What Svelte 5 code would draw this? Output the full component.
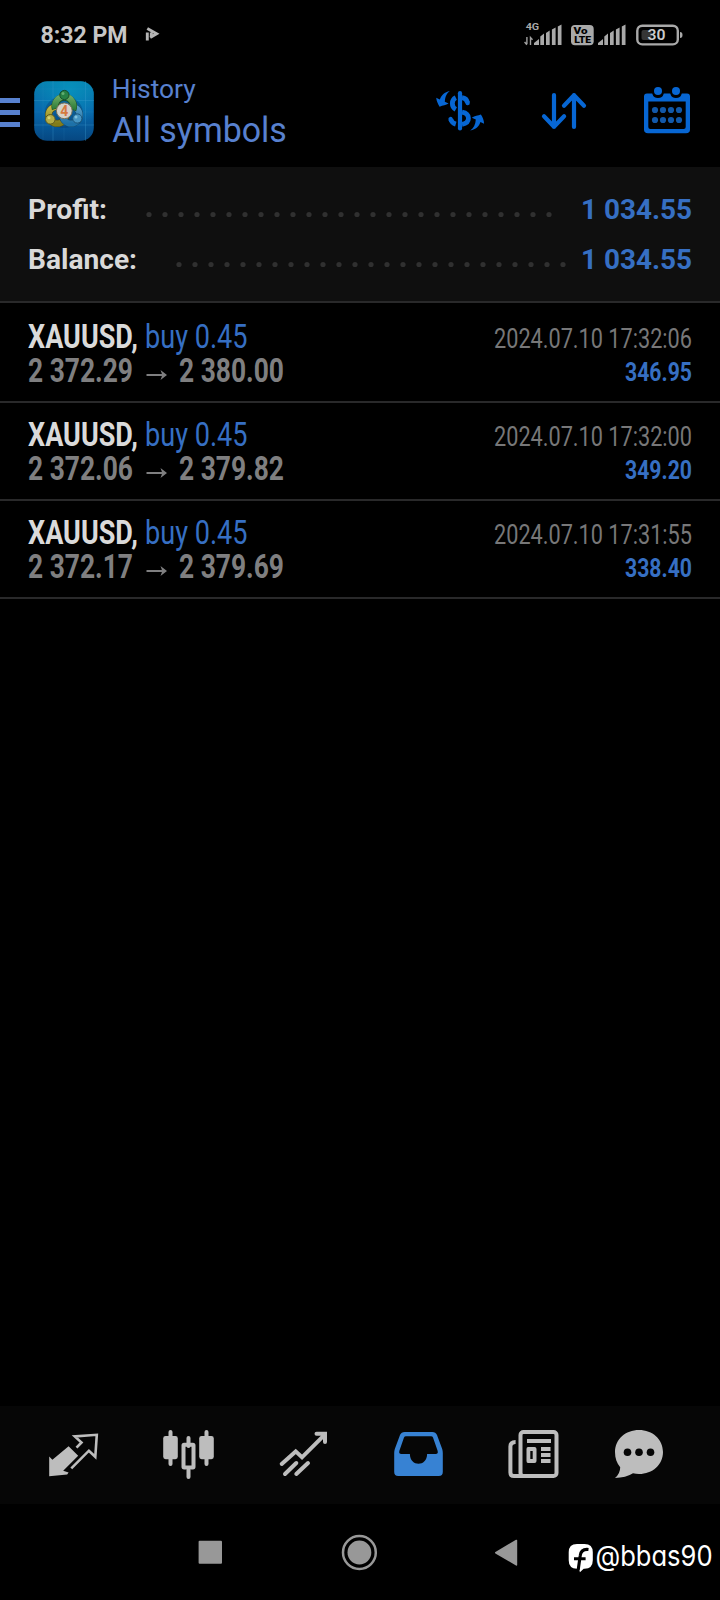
<script>
  const summary = [
    { label: 'Profit:', value: '1 034.55', lw: 79, start: 148.5, dots: 26 },
    { label: 'Balance:', value: '1 034.55', lw: 109, start: 178.5, dots: 25 }
  ];
  const deals = [
    { open: '2 372.29', close: '2 380.00', time: '2024.07.10 17:32:06', profit: '346.95' },
    { open: '2 372.06', close: '2 379.82', time: '2024.07.10 17:32:00', profit: '349.20' },
    { open: '2 372.17', close: '2 379.69', time: '2024.07.10 17:31:55', profit: '338.40' }
  ];
</script>

{#snippet fit(text, width, size, weight, color, y = 27)}
  <svg class="fit" {width} height="34" viewBox="0 0 {width} 34">
    <text x="0" {y} textLength={width} lengthAdjust="spacingAndGlyphs" font-size={size} font-weight={weight} fill={color}>{text}</text>
  </svg>
{/snippet}

{#snippet bars(x)}
  <path d="M{x} 45v-2l5-4v6zM{x + 6.3} 36.5l3.7-3V45h-3.7zM{x + 12} 33l3.7-2.4V45h-3.7zM{x + 17.9} 29.4l3.7-2V45h-3.7zM{x + 23.8} 26.5l3.7-2V45h-3.7z" />
{/snippet}

<div class="screen">
  <header class="status">
    <svg class="clock" width="180" height="62" viewBox="0 0 180 62">
      <text x="40.5" y="43" textLength="87" lengthAdjust="spacingAndGlyphs" font-size="23" font-weight="700" fill="#c6c6c6">8:32 PM</text>
      <path d="M147.300 32.500v8M147.300 28.500l9.300 5.200-6.400 3.800M151.300 32.500v5" fill="none" stroke="#b5b5b5" stroke-width="2.900" />
    </svg>
    <svg width="210" height="62" viewBox="510 0 210 62" fill="#a9a9a9">
      <text x="525.7" y="30" font-size="9.5" font-weight="700" textLength="13.5" lengthAdjust="spacingAndGlyphs">4G</text>
      <path d="M526.9 37v7M524.6 42l2.3 2.8M530.5 45v-7.4l2 2.2" fill="none" stroke="#a0a0a0" stroke-width="1.4" />
      {@render bars(534)}
      {@render bars(598)}
      <rect x="571" y="25" width="22.7" height="20.3" rx="4" />
      <text class="volte" x="573.6" y="34.3" font-size="9" textLength="14" lengthAdjust="spacingAndGlyphs">Vo</text>
      <text class="volte" x="574.2" y="42.8" font-size="9" textLength="17" lengthAdjust="spacingAndGlyphs">LTE</text>
      <rect x="637.3" y="25.7" width="40.5" height="18.7" rx="5" fill="none" stroke="#a9a9a9" stroke-width="2.4" />
      <rect x="641.5" y="30" width="10" height="10" rx="2" fill="#353535" />
      <path d="M680 32q2.5 0 2.5 3t-2.5 3z" />
      <text x="647.6" y="40" font-size="15.5" font-weight="600" fill="#cbcbcb" textLength="18" lengthAdjust="spacingAndGlyphs">30</text>
    </svg>
  </header>

  <div class="appbar">
    <div class="burger"><i></i><i></i><i></i></div>
    <svg class="logo" width="60" height="61" viewBox="34 81 60 61">
      <defs>
        <linearGradient id="bg" x1="0" y1="0" x2="0" y2="1"><stop offset="0" stop-color="#087eae" /><stop offset=".5" stop-color="#0869ae" /><stop offset="1" stop-color="#064781" /></linearGradient>
        <radialGradient id="glow" cx=".6" cy=".15" r=".6"><stop offset="0" stop-color="#069ec4" stop-opacity=".6" /><stop offset="1" stop-color="#069ec4" stop-opacity="0" /></radialGradient>
        <linearGradient id="green" x1="0" y1="0" x2="0" y2="1"><stop offset="0" stop-color="#6aa862" /><stop offset="1" stop-color="#2a7a36" /></linearGradient>
        <linearGradient id="gold" x1="0" y1="0" x2="0" y2="1"><stop offset="0" stop-color="#c5bb48" /><stop offset="1" stop-color="#827c1a" /></linearGradient>
        <linearGradient id="blue" x1="0" y1="0" x2="0" y2="1"><stop offset="0" stop-color="#579fc7" /><stop offset="1" stop-color="#1d71a8" /></linearGradient>
      </defs>
      <rect x="34.2" y="81.2" width="59.6" height="59.6" rx="13" fill="url(#bg)" />
      <rect x="34.2" y="81.2" width="59.6" height="59.6" rx="13" fill="url(#glow)" />
      <path d="M34 100.5h60M34 125h60M53 81v60M85.5 81v60" stroke="#3f9ed0" stroke-opacity=".32" />
      <path d="M34 89h60M34 112h60M43 81v60M64 81v60" stroke="#3f9ed0" stroke-opacity=".12" />
      <ellipse cx="63.8" cy="112" rx="19" ry="16" fill="#06346b" opacity=".35" />
      <g fill="none" stroke-width="7">
        <circle cx="57.2" cy="115" r="8.6" stroke="#4f4c13" />
        <circle cx="57.2" cy="115" r="8.6" stroke="url(#gold)" stroke-width="6" />
        <circle cx="71" cy="115" r="8.6" stroke="#164b6b" />
        <circle cx="71" cy="115" r="8.6" stroke="url(#blue)" stroke-width="6" />
        <path d="M55.300 109a9.300 9.300 0 1 1 17.600 1" stroke="#1b4d24" />
        <path d="M55.300 108.500a9.300 9.300 0 1 1 17.600 1" stroke="url(#green)" stroke-width="6" />
      </g>
      <circle cx="64.4" cy="95" r="4.6" fill="#278145" stroke="#174c2a" />
      <circle cx="50.3" cy="119.3" r="4.8" fill="#b4ad48" stroke="#5e5a1e" />
      <circle cx="77.3" cy="118.5" r="4.6" fill="#4695c3" stroke="#1b557b" />
      <circle cx="63" cy="93.5" r="1.5" fill="#62ad71" /><circle cx="49" cy="117.8" r="1.5" fill="#d8d275" /><circle cx="76" cy="117" r="1.5" fill="#7fc2df" />
      <circle cx="64.3" cy="110.8" r="7.9" fill="#d3d1ca" stroke="#756f58" />
      <text x="60.3" y="115.9" font-size="14" font-weight="700" textLength="8" lengthAdjust="spacingAndGlyphs" fill="#d4793f">4</text>
    </svg>
    <svg class="titles" width="190" height="105" viewBox="110 62 190 105" fill="#5881cf">
      <text x="111.8" y="98" font-size="26" textLength="84" lengthAdjust="spacingAndGlyphs">History</text>
      <text x="112.3" y="142" font-size="34.4" textLength="174.5" lengthAdjust="spacingAndGlyphs">All symbols</text>
    </svg>
    <svg class="actions" width="300" height="105" viewBox="420 62 300 105" fill="none" stroke="#0766d3" stroke-width="4.2" stroke-linecap="round" stroke-linejoin="round">
      <g>
        <path d="M460 93.200v35.300" />
        <path d="M455.800 97.700c-4.600 2.200-4.600 9.200 0 11.700M462 97.700q4.600.6 5.600 5M462 112.200c8.600 1.600 8.600 10.600 0 12.200M450.800 119.300q1 3.600 5 4.800" stroke-width="4.800" stroke-linecap="butt" />
        <path d="M467.500 102.400l.1.600M450.600 119l.2.600" stroke-width="4.400" />
        <path d="M449.8 90.9c-5.4 1.4-8.3 3.8-10 8.6l-3.6-1.8c.4 3.3 1.5 6 3.4 9 3.5-1.4 6.2-1.3 9-3.2l-3.8-1.7c.4-5.5 1.7-8.2 5-10.900z" fill="#0766d3" stroke="none" />
        <path d="M470.2 130.6c5.800-1.200 9-4.200 10.200-8.600l3.700 1.800c-.2-3.400-1.200-6-3.200-9.200-3 1.100-6.200 1.200-9.100 3.100l4 1.700c-.3 5.200-2.100 8.500-5.600 11.200z" fill="#0766d3" stroke="none" />
      </g>
      <path d="M554 95v32M544 116.2l10 10.500 10.100-10.500M574 127V95M564 105.700l10-10.500 10 10.500" />
      <path d="M644 96.500q0-3 3-3h5.200q1.300 4.600 5.800 4.600 4.600 0 5.800-4.600h6.400q1.300 4.600 5.800 4.600 4.600 0 5.800-4.600h5.200q3 0 3 3v33q0 3.800-4 3.800h-38q-4 0-4-3.800zm4.300 5v25.600q0 2 2 2h33.400q2 0 2-2v-25.600z" fill="#0766d3" fill-rule="evenodd" stroke="none" />
      <g fill="#0766d3" stroke="none"><circle cx="658" cy="91" r="4" /><circle cx="676" cy="91" r="4" /></g>
      <g fill="#1258a9" stroke="none">
        {#each [655, 663, 671, 679] as x}<circle cx={x} cy="110" r="3.1" /><circle cx={x} cy="120" r="3.1" />{/each}
      </g>
    </svg>
  </div>

  <section class="summary">
    {#each summary as s}
      <div class="sumrow">
        {@render fit(s.label, s.lw, 28, 700, '#d9d9d9')}
        <svg class="leader" width={581 - s.start + 6} height="34" viewBox="{s.start - 6} 0 {587 - s.start} 34" fill="#303030">
          {#each Array(s.dots) as _, i}<circle cx={s.start + i * 16} cy="22.5" r="2.6" />{/each}
        </svg>
        {@render fit(s.value, 111, 28, 700, '#366fc3')}
      </div>
    {/each}
  </section>

  <main>
    {#each deals as d}
      <article>
        <div class="line">
          <div class="left">
            {@render fit('XAUUSD,', 110, 32.3, 700, '#dadada', 27.6)}
            <span class="gap"></span>
            {@render fit('buy 0.45', 102.5, 32.3, 400, '#366fc3', 27.6)}
          </div>
          {@render fit(d.time, 198, 27, 400, '#777778', 27.6)}
        </div>
        <div class="line">
          <div class="left">
            {@render fit(d.open, 105, 32.3, 700, '#7f7f80', 27.6)}
            <svg width="46" height="34" viewBox="0 0 46 34" fill="none" stroke="#7f7f80" stroke-width="2"><path d="M13.500 21h18" /><path d="M27.500 16l6.500 5-6.500 5 1.800-5z" fill="#7f7f80" stroke="none" /></svg>
            {@render fit(d.close, 105, 32.3, 700, '#7f7f80', 27.6)}
          </div>
          {@render fit(d.profit, 67, 26, 700, '#366fc3')}
        </div>
      </article>
    {/each}
  </main>

  <nav class="tabs">
    <svg viewBox="16 1406 115 98">
      <path d="M68.6 1446.2l9.6 9.6-15 15 5.400 1.600-1.400 2-18 1.800V1456.400l3.200 3.300z" />
      <path d="M76.500 1447.700l5-5.200-6.700-6.100 22-1.600-1.500 22-6.400-6.100-17.600 17.700" class="stroke" stroke-width="2.6" />
    </svg>
    <svg viewBox="131 1406 115 98">
      <g class="stroke" stroke-width="4" stroke-linecap="round"><path d="M170.5 1432v32M206.500 1432v32M188.500 1438v8M188.500 1470v7" /><rect x="183.500" y="1444.700" width="10" height="22.700" rx=".6" /></g>
      <rect x="163.200" y="1436" width="14.600" height="23.200" rx="2.400" /><rect x="199.200" y="1436" width="14.600" height="23.200" rx="2.400" />
    </svg>
    <svg viewBox="246 1406 115 98">
      <path d="M281.700 1464l14-12.600 6.300 5.900 22.500-22.500M316.500 1433.800h8.500v8.200M285 1474l11.300-11M296.300 1474l11.700-11" class="stroke" stroke-width="4" stroke-linecap="round" />
    </svg>
    <svg viewBox="361 1406 115 98">
      <path class="active" d="M404.700 1432h27.600q3.400 0 4.700 3l5.200 14q.6 2 .6 4v19q0 4-4 4h-40.600q-4 0-4-4v-19q0-2 .6-4l5.200-14q1.300-3 4.700-3zm1.300 4.200q-1.500 0-2 1.400l-4.600 13.200q-.9 3.200 2 3.200h8.500c0 13 17.200 13 17.200 0h8.500q2.900 0 2-3.200l-4.600-13.200q-.5-1.400-2-1.400z" fill-rule="evenodd" />
    </svg>
    <svg viewBox="476 1406 115 98">
      <g class="stroke" stroke-width="4"><rect x="520.500" y="1432" width="36" height="44" rx="3" /><path d="M515.600 1442q-5.200 0-5.200 4.500v26q0 3.500 3.500 3.500H524M527 1441h24M541 1449h9.500M541 1455h9.500M541 1461h9.500" stroke-linejoin="round" /></g>
      <path d="M528 1447h6.500q2 0 2 2v12q0 2-2 2H528q-1.500 0-1.500-2v-12q0-2 1.500-2zm2.300 4v8h2.400v-8z" fill-rule="evenodd" />
    </svg>
    <svg viewBox="591 1406 115 98">
      <path d="M639 1430c13.500 0 24 9.300 24 22s-10.500 22-24 22q-3 0-6-.7-7.200 4.600-18 4.700 5.200-4.600 5.200-10.800c-3.400-4-5.200-9-5.200-15.200 0-12.700 10.500-22 24-22z" />
      <g fill="#060606"><circle cx="627.500" cy="1452.300" r="3.800" /><circle cx="639" cy="1452.300" r="3.800" /><circle cx="650.500" cy="1452.300" r="3.800" /></g>
    </svg>
  </nav>

  <footer>
    <svg width="720" height="96" viewBox="0 1504 720 96" fill="#989898">
      <rect x="198.600" y="1540.800" width="23.400" height="23" rx="1" />
      <circle cx="359.400" cy="1552.500" r="11.900" /><circle cx="359.400" cy="1552.500" r="16.400" fill="none" stroke="#989898" stroke-width="2.500" />
      <path d="M495.800 1552.700l20.600-12.200V1564.900z" stroke="#989898" stroke-width="1.600" stroke-linejoin="round" />
      <path fill="#fff" d="M577 1544h7.500q8.300 0 8.300 8.300v8q0 8.400-8.300 8.400h-.8l-3.800 3.600-.7-3.600H577q-8.300 0-8.300-8.400v-8q0-8.300 8.300-8.300z" />
      <path d="M588.500 1549.500q-7.500-.8-8.300 6.200l-2 14M574 1558.800h11.600" fill="none" stroke="#000" stroke-width="3.100" />
      <text class="mark" x="595.500" y="1565.700" font-size="28.500" font-weight="400" textLength="117" lengthAdjust="spacingAndGlyphs" fill="#fff">@bbas90</text>
    </svg>
  </footer>
</div>

<style>
  :global(body) { margin: 0; background: #000; }
  .screen { width: 720px; height: 1600px; background: #000; display: flex; flex-direction: column; overflow: hidden; font-family: Roboto, sans-serif; }
  svg { display: block; flex: none; font-family: Roboto, sans-serif; }
  .fit { overflow: visible; }
  .status { height: 62px; display: flex; justify-content: space-between; }
  .volte { fill: #000; font-weight: 900; }
  .appbar { height: 105px; display: flex; }
  .burger { width: 20px; margin: 36px 14px 0 0; display: flex; flex-direction: column; gap: 7px; }
  .burger i { height: 5px; background: #5881cf; }
  .logo { margin-top: 19px; }
  .titles { margin-left: 16px; }
  .actions { margin-left: auto; }
  .summary { height: 134px; box-sizing: border-box; padding: 25px 28px 0 28px; background: #0f0f0f; display: flex; flex-direction: column; gap: 16px; }
  .sumrow { height: 34px; display: flex; justify-content: space-between; }
  .leader { margin-left: auto; }
  main { border-top: 2px solid #29292a; padding-top: 2px; flex: 1; }
  article { height: 98px; box-sizing: border-box; padding: 15px 28px 0; border-bottom: 2px solid #29292a; }
  .line { display: flex; justify-content: space-between; height: 34px; }
  .left { display: flex; }
  .gap { width: 7px; }
  .tabs { height: 98px; background: #060606; padding: 0 14px 0 16px; display: grid; grid-template-columns: repeat(6, 115px); fill: #bdbdbd; }
  .tabs svg { width: 115px; height: 98px; }
  .stroke { fill: none; stroke: #bdbdbd; }
  .active { fill: #3782d3; }
  footer { height: 96px; }
  .mark { font-family: Inter, sans-serif; font-feature-settings: "cv11" 1; }
</style>
